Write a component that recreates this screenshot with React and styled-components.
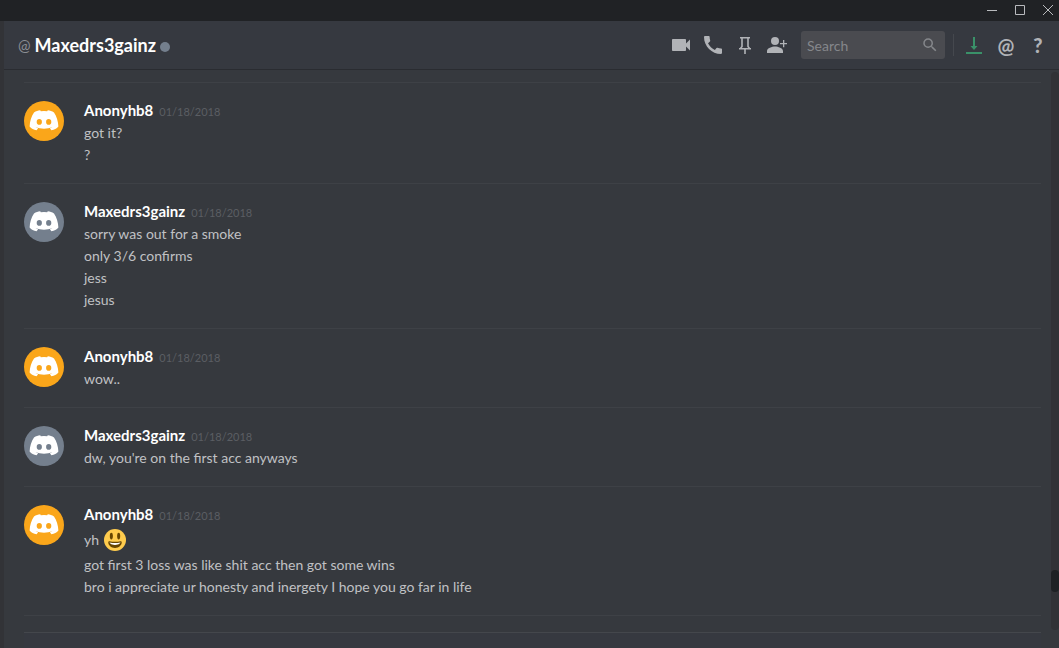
import React from 'react';
import styled, { createGlobalStyle } from 'styled-components';
import { MdVideocam, MdCall, MdSearch } from 'react-icons/md';

const Global = createGlobalStyle`
  * { box-sizing: border-box; }
  body { margin: 0; background: #36393e; font-family: Lato, "Liberation Sans", sans-serif; }
  button { font: inherit; padding: 0; border: 0; background: none; color: inherit; }
`;
const Window = styled.div`
  display: flex; flex-direction: column; height: 100vh; overflow: hidden;
`;
const TitleBar = styled.div`
  flex: none; height: 21px; background: #202225; color: #b9bbbe;
  display: flex; justify-content: flex-end; align-items: flex-start; gap: 8px; padding-right: 1px;
`;
const WindowButton = styled.button`
  width: 20px; height: 20px; display: flex; align-items: center; justify-content: center;
`;
const Body = styled.div`
  flex: 1; min-height: 0; display: flex; flex-direction: column;
  border-left: 4px solid #323337;
`;
const Header = styled.header`
  flex: none; height: 49px; padding: 0 9px 0 14px; background: #363940;
  border-bottom: 1px solid #2a2c31; display: flex; align-items: center;
`;
const At = styled.span` font-size: 15px; color: #8a8d93; margin-right: 4px; `;
const Title = styled.h1` margin: 0; font-size: 18px; font-weight: 700; line-height: 22px; color: #fff; `;
const Status = styled.span`
  width: 10px; height: 10px; border-radius: 50%; background: #747f8d; margin: 4px 0 0 4px;
`;
const Tools = styled.div` display: flex; align-items: center; gap: 8px; margin-left: auto; `;
const Tool = styled.button`
  width: 24px; height: 24px; display: flex; align-items: center; justify-content: center;
  color: ${p => p.$color || '#b1b3b7'};
  font-size: 20px; line-height: 24px; font-weight: ${p => p.$weight || 400};
`;
const Search = styled.label`
  width: 144px; height: 28px; margin: 0 0 0 4px; padding: 0 6px; border-radius: 3px;
  background: #4a4b50; color: #85878b; display: flex; align-items: center;
`;
const SearchInput = styled.input`
  flex: 1; min-width: 0; border: 0; padding: 0; outline: 0; background: none; color: #dcddde;
  font: 14px Lato, sans-serif;
  &::placeholder { color: #85878b; opacity: 1; }
`;
const Rule = styled.div` width: 1px; height: 22px; background: #45484e; `;
const Content = styled.div` flex: 1; min-height: 0; display: flex; `;
const Main = styled.main` flex: 1; min-width: 0; padding: 12px 10px 0 20px; `;
const Group = styled.article`
  display: flex; gap: 20px; padding: 17px 0; border-top: 1px solid #3e4146;
`;
const Avatar = styled.div`
  flex: none; width: 40px; height: 40px; margin-top: 1px; border-radius: 50%;
  background: ${p => p.$color}; display: flex; align-items: center; justify-content: center;
`;
const Lines = styled.div` min-width: 0; color: #c0c1c4; font-size: 14px; line-height: 22px; `;
const Meta = styled.div` display: flex; align-items: baseline; gap: 6px; height: 22px; `;
const Name = styled.h2` margin: 0; font-size: 15px; line-height: 20px; font-weight: 700; color: #fff; `;
const Time = styled.time` font-size: 11px; line-height: 16px; color: #5b5e63; `;
const Line = styled.p`
  margin: 0; display: flex; align-items: center; gap: 5px;
  min-height: ${p => (p.$emoji ? '28px' : '22px')};
`;
const FormGap = styled.div` border-top: 1px solid #3e4146; padding-top: 16px; `;
const Form = styled.div` border-top: 1px solid #44474c; height: 16px; background: #363940; `;
const Track = styled.div`
  flex: none; width: 8px; height: calc(100% - 20px); margin-top: 2px;
  border-radius: 4px; background: #313236;
  display: flex; flex-direction: column; justify-content: flex-end; padding-bottom: 38px;
`;
const Thumb = styled.div` height: 22px; border-radius: 4px; background: #1e2124; `;

const Logo = () => (
  <svg width="30" height="22" viewBox="0 0 30 22" aria-hidden="true">
    <path fill="#fff" fillRule="evenodd" d="M5 2.400C7 1 9 .4 11.200.2l.6 1.100a22 22 0 0 1 6.400 0l.6-1.100C21 .4 23 1 25 2.400c2.600 4 4.200 8.600 4.400 14.200-1.800 2.200-4 3.400-7 3.700l-1.500-2a11 11 0 0 0 2.500-1.200c-5.200 2.100-11.600 2.100-16.800 0 .8.5 1.600.9 2.500 1.200l-1.500 2c-3-.3-5.200-1.500-7-3.700C.8 11 2.400 6.400 5 2.400ZM10.300 9.100a2.600 2.800 0 1 0 0 5.600 2.600 2.800 0 1 0 0-5.600Zm9.400 0a2.600 2.800 0 1 0 0 5.600 2.600 2.800 0 1 0 0-5.600Z" />
  </svg>
);
const Smile = () => (
  <svg width="22" height="22" viewBox="0 0 36 36" role="img" aria-label="smiley">
    <circle cx="18" cy="18" r="18" fill="#FFCC4D" />
    <path fill="#664500" d="M18 21c-3.600 0-6-.4-9-1-.7-.1-2 0-2 2 0 4 4.600 9 11 9s11-5 11-9c0-2-1.300-2.100-2-2-3 .6-5.400 1-9 1Z" />
    <path fill="#fff" d="M9 22s3 1 9 1 9-1 9-1-2 4-9 4-9-4-9-4Z" />
    <ellipse cx="12" cy="11.500" rx="2.500" ry="5.500" fill="#664500" />
    <ellipse cx="24" cy="11.500" rx="2.500" ry="5.500" fill="#664500" />
  </svg>
);

const A = { name: 'Anonyhb8', color: '#faa61a' };
const M = { name: 'Maxedrs3gainz', color: '#747f8d' };
const groups = [
  { by: A, lines: ['got it?', '?'] },
  { by: M, lines: ['sorry was out for a smoke', 'only 3/6 confirms', 'jess', 'jesus'] },
  { by: A, lines: ['wow..'] },
  { by: M, lines: ["dw, you're on the first acc anyways"] },
  { by: A, lines: ['yh', 'got first 3 loss was like shit acc then got some wins', 'bro i appreciate ur honesty and inergety I hope you go far in life'], emoji: true },
];

export default function App() {
  return (
    <Window>
      <Global />
      <TitleBar>
        <WindowButton aria-label="Minimize"><svg width="10" height="10"><path d="M0 5.500H10" stroke="currentColor" /></svg></WindowButton>
        <WindowButton aria-label="Maximize"><svg width="10" height="10"><path d="M.5.5h9v9h-9Z" fill="none" stroke="currentColor" /></svg></WindowButton>
        <WindowButton aria-label="Close"><svg width="10" height="10"><path d="M0 0 10 10M10 0 0 10" stroke="currentColor" /></svg></WindowButton>
      </TitleBar>
      <Body>
        <Header>
          <At>@</At><Title>Maxedrs3gainz</Title><Status />
          <Tools>
            <Tool aria-label="Start video call"><MdVideocam size={24} /></Tool>
            <Tool aria-label="Start voice call"><MdCall size={24} /></Tool>
            <Tool aria-label="Pinned messages">
              <svg width="24" height="24" viewBox="0 0 24 24" fill="none" stroke="currentColor" strokeWidth="1.600"><path d="M7 4.700h10M9 5v8.500l-1.500 2M15 5v8.500l1.500 2M6 15.800h12M12 16v5" /></svg>
            </Tool>
            <Tool aria-label="Add friends">
              <svg width="24" height="24" viewBox="0 0 24 24" fill="currentColor"><circle cx="10" cy="8" r="4" /><path d="M2 20v-2c0-3 5-4.500 8-4.500s8 1.500 8 4.500v2ZM18 7h1.300v3H22v1.300h-2.700v3H18v-3h-3V10h3Z" /></svg>
            </Tool>
            <Search><SearchInput placeholder="Search" aria-label="Search" /><MdSearch size={18} /></Search>
            <Rule />
            <Tool aria-label="Downloads" $color="#3a9169">
              <svg width="24" height="24" viewBox="0 0 24 24" fill="none" stroke="currentColor" strokeWidth="2"><path d="M12 4v11M4 20h16" /><path d="M8.500 13h7L12 17Z" fill="currentColor" stroke="none" /></svg>
            </Tool>
            <Tool aria-label="Mentions" $weight={700}>@</Tool>
            <Tool aria-label="Help" $weight={900}>?</Tool>
          </Tools>
        </Header>
        <Content>
          <Main>
            {groups.map((g, i) => (
              <Group key={i}>
                <Avatar $color={g.by.color}><Logo /></Avatar>
                <Lines>
                  <Meta><Name>{g.by.name}</Name><Time>01/18/2018</Time></Meta>
                  {g.lines.map((t, j) => (
                    <Line key={t} $emoji={g.emoji && j === 0}>{t}{g.emoji && j === 0 && <Smile />}</Line>
                  ))}
                </Lines>
              </Group>
            ))}
            <FormGap><Form /></FormGap>
          </Main>
          <Track><Thumb /></Track>
        </Content>
      </Body>
    </Window>
  );
}
